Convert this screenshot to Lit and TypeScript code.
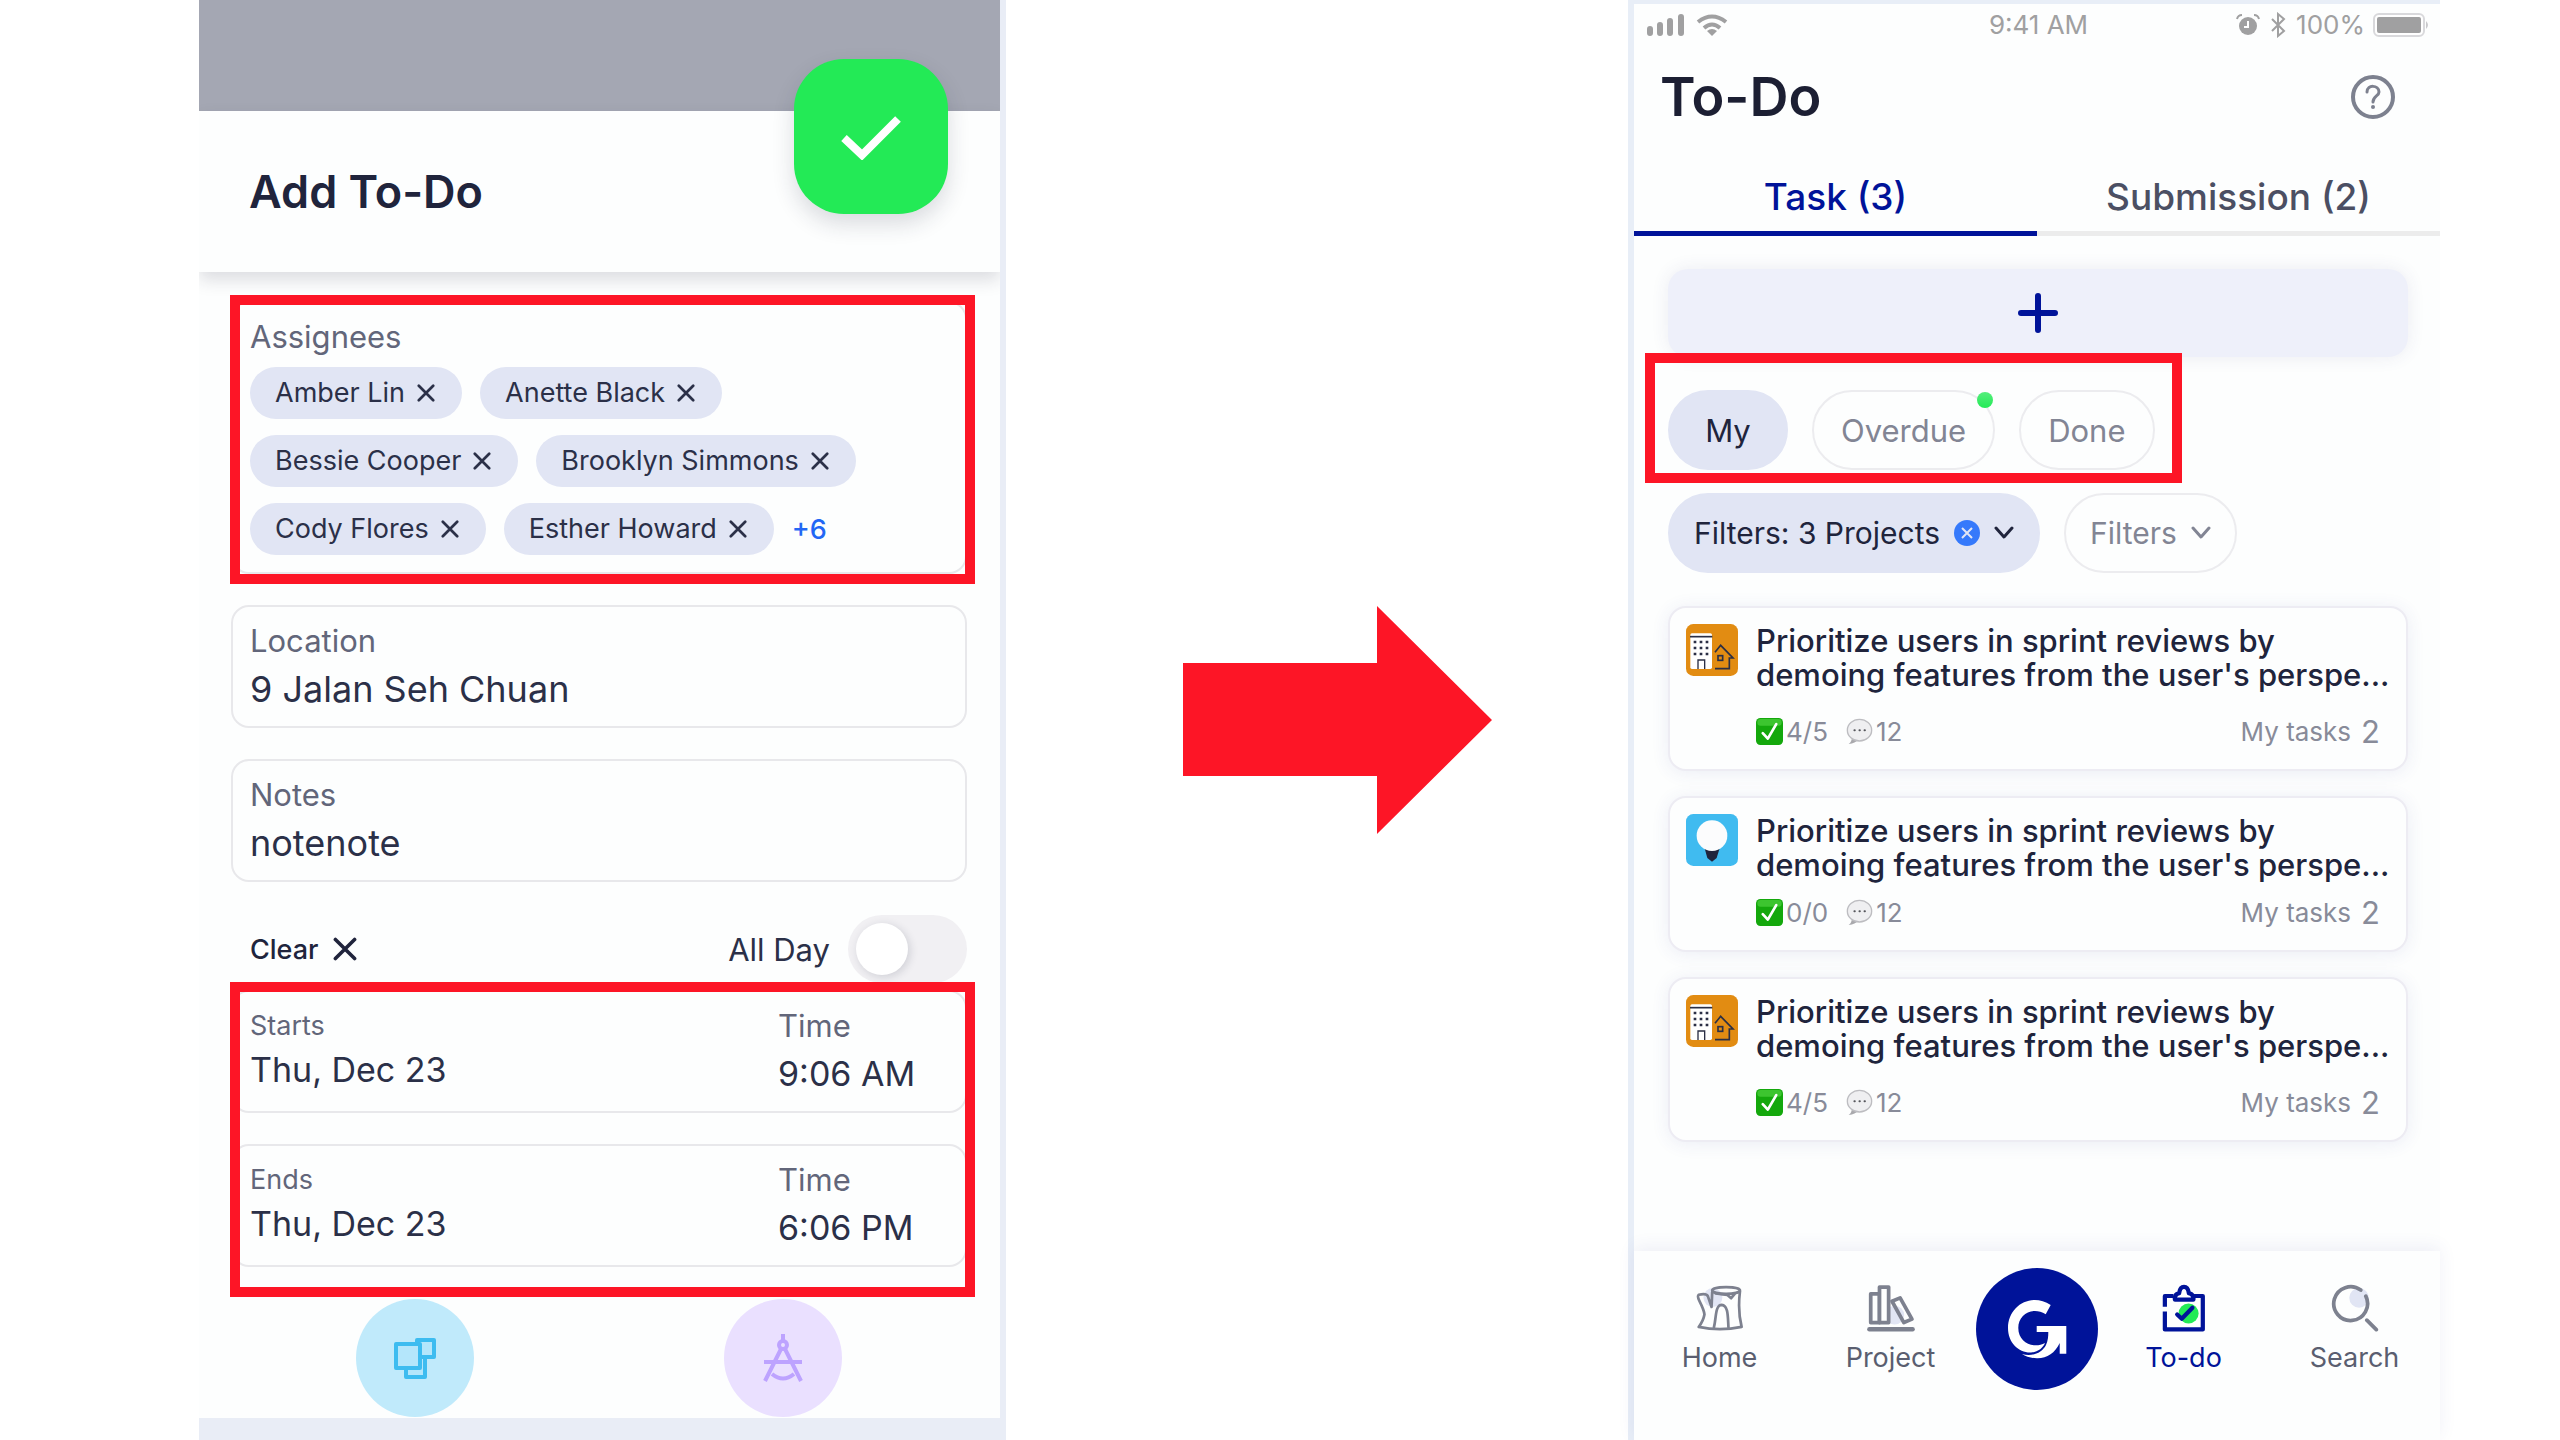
import { LitElement, html, css, svg, nothing } from "lit";
import { customElement, property } from "lit/decorators.js";

const base = css`
  *,
  *::before,
  *::after {
    box-sizing: border-box;
  }
  :host {
    display: block;
    font-family: Inter, "Open Sans", sans-serif;
    color: #20243c;
  }
  button,
  input {
    font: inherit;
    color: inherit;
    margin: 0;
    padding: 0;
    border: 0;
    background: none;
  }
  h1,
  h2,
  p,
  ul {
    margin: 0;
    padding: 0;
    list-style: none;
  }
  svg {
    display: block;
    flex: none;
  }
`;

const cross = (size: number, stroke: number) => html`
  <svg width=${size} height=${size} viewBox="0 0 20 20" aria-hidden="true">
    <path d="M2 2L18 18M18 2L2 18" fill="none" stroke="currentColor" stroke-width=${stroke} stroke-linecap="round" />
  </svg>
`;

const chevron = html`
  <svg width="20" height="14" viewBox="0 0 20 14" aria-hidden="true">
    <path d="M2 2L10 11L18 2" fill="none" stroke="currentColor" stroke-width="3" stroke-linecap="round" stroke-linejoin="round" />
  </svg>
`;

@customElement("add-todo-sheet")
class AddTodoSheet extends LitElement {
  static styles = [
    base,
    css`
      :host {
        display: flex;
        flex-direction: column;
        overflow: hidden;
        background: #fdfefe;
        border-right: 6px solid #e9edf6;
        border-bottom: 22px solid #e9edf6;
      }
      .backdrop {
        height: 111px;
        background: #a4a7b3;
      }
      .head {
        position: relative;
        display: flex;
        align-items: center;
        height: 161px;
        padding: 0 51px 0 50px;
        background: #fdfefe;
        box-shadow: 0 8px 16px rgba(32, 36, 60, 0.15);
      }
      .head h2 {
        font-size: 45px;
        line-height: 60px;
        font-weight: 600;
      }
      .confirm {
        position: absolute;
        top: -52px;
        right: 52px;
        display: grid;
        place-items: center;
        width: 154px;
        height: 155px;
        border-radius: 50px;
        background: #23ea56;
        box-shadow: 0 10px 22px rgba(32, 36, 60, 0.16);
      }
      .body {
        padding: 29px 33px 0 32px;
      }
      .card {
        display: block;
        border: 2px solid #e8e8eb;
        border-radius: 18px;
        padding: 16px 17px 13px;
      }
      .card + .card,
      .framed + .card {
        margin-top: 31px;
      }
      .framed {
        position: relative;
      }
      .framed::after {
        content: "";
        position: absolute;
        inset: -6px -8px -10px -1px;
        border: 10px solid #fd1526;
        pointer-events: none;
      }
      .framed.dates::after {
        inset: -8px -8px -30px -1px;
      }
      .people {
        padding-bottom: 17px;
      }
      .label {
        display: block;
        font-size: 31px;
        line-height: 36px;
        color: #62667a;
      }
      .label.small {
        font-size: 27px;
      }
      .value {
        display: block;
        width: 100%;
        height: 48px;
        margin-top: 6px;
        font-size: 36px;
        line-height: 48px;
        color: #2b3048;
        outline: none;
      }
      .when .value {
        font-size: 34px;
      }
      .value.tight {
        margin-top: 2px;
      }
      .chips {
        display: flex;
        flex-wrap: wrap;
        align-items: center;
        gap: 16px 18px;
        margin-top: 12px;
      }
      .chip {
        display: flex;
        align-items: center;
        gap: 12px;
        height: 52px;
        padding: 0 27px 0 25px;
        border-radius: 26px;
        background: #e1e5f4;
        font-size: 27px;
        line-height: 36px;
        color: #2b3048;
      }
      .more {
        font-size: 27px;
        font-weight: 500;
        color: #2367f5;
        text-decoration: none;
      }
      .options {
        display: flex;
        align-items: center;
        justify-content: space-between;
        height: 68px;
        margin: 33px 0 7px;
      }
      .clear {
        display: flex;
        align-items: center;
        gap: 14px;
        padding-left: 19px;
        font-size: 27px;
        font-weight: 500;
      }
      .allday {
        display: flex;
        align-items: center;
        gap: 18px;
        font-size: 31px;
        color: #2b3048;
      }
      .switch {
        appearance: none;
        width: 119px;
        height: 68px;
        padding: 8px;
        border-radius: 34px;
        background: #f1f0f3;
      }
      .switch::before {
        content: "";
        display: block;
        width: 52px;
        height: 52px;
        border-radius: 50%;
        background: #ffffff;
        box-shadow: 2px 2px 8px rgba(32, 36, 60, 0.16);
      }
      .when {
        display: grid;
        grid-template-columns: 1fr 170px;
      }
      .actions {
        display: grid;
        grid-template-columns: 1fr 1fr;
        justify-items: center;
        margin-top: 32px;
      }
      .round {
        display: grid;
        place-items: center;
        width: 118px;
        height: 118px;
        border-radius: 50%;
      }
      .blue {
        background: #c0eafb;
      }
      .violet {
        background: #eae0ff;
      }
    `,
  ];

  private people = ["Amber Lin", "Anette Black", "Bessie Cooper", "Brooklyn Simmons", "Cody Flores", "Esther Howard"];

  private dates = [
    { id: "start", label: "Starts", day: "Thu, Dec 23", time: "9:06 AM" },
    { id: "end", label: "Ends", day: "Thu, Dec 23", time: "6:06 PM" },
  ];

  render() {
    return html`
      <div class="backdrop"></div>
      <header class="head">
        <h2>Add To-Do</h2>
        <button class="confirm" type="button" aria-label="Save">
          <svg width="62" height="46" viewBox="0 0 62 46">
            <path d="M4 24L22 41L58 5" fill="none" stroke="#fff" stroke-width="8" />
          </svg>
        </button>
      </header>
      <div class="body">
        <div class="framed">
          <section class="card people">
            <span class="label">Assignees</span>
            <div class="chips">
              ${this.people.map(
                (name) => html`<button class="chip" type="button">${name} ${cross(18, 3)}</button>`
              )}
              <a class="more" href="#assignees">+6</a>
            </div>
          </section>
        </div>
        <div class="card">
          <label class="label" for="location">Location</label>
          <input class="value" id="location" type="text" value="9 Jalan Seh Chuan" />
        </div>
        <div class="card">
          <label class="label" for="notes">Notes</label>
          <input class="value" id="notes" type="text" value="notenote" />
        </div>
        <div class="options">
          <button class="clear" type="button">Clear ${cross(24, 3)}</button>
          <label class="allday">All Day <input class="switch" type="checkbox" role="switch" /></label>
        </div>
        <div class="framed dates">
          ${this.dates.map(
            (d) => html`
              <div class="card when">
                <div>
                  <label class="label small" for="${d.id}-day">${d.label}</label>
                  <input class="value tight" id="${d.id}-day" type="text" value=${d.day} />
                </div>
                <div>
                  <label class="label" for="${d.id}-time">Time</label>
                  <input class="value" id="${d.id}-time" type="text" value=${d.time} />
                </div>
              </div>
            `
          )}
        </div>
        <div class="actions">
          <button class="round blue" type="button" aria-label="Project">
            <svg width="48" height="46" viewBox="0 0 48 46" fill="#b4e6fb" stroke="#3dbcf0" stroke-width="4" stroke-linejoin="round">
              <path d="M15 33V42H34V22" />
              <path d="M26 5H43V22H26Z" />
              <path d="M5 9H29V33H5Z" />
            </svg>
          </button>
          <button class="round violet" type="button" aria-label="Design">
            <svg width="44" height="50" viewBox="0 0 44 50" fill="none" stroke="#bda3ff" stroke-width="4">
              <path d="M22 1V8" />
              <circle cx="22" cy="12" r="4" />
              <path d="M20 16L4 48M24 16L40 48M3 29H41" />
              <path d="M11 41Q22 50 33 41" />
            </svg>
          </button>
        </div>
      </div>
    `;
  }
}

const projectTile = {
  building: svg`
    <rect width="156" height="156" rx="22" fill="#e28c12" />
    <rect x="13" y="28" width="65" height="107" rx="5" fill="#fff" />
    <path d="M12 38H79" stroke="#2b2f45" stroke-width="5" />
    <path d="M23 54H67M23 72H67M23 90H67" stroke="#2b2f45" stroke-width="8" stroke-dasharray="8 10" />
    <path d="M36 135V108H56V135" fill="none" stroke="#2b2f45" stroke-width="4" />
    <path d="M87 85L104 64L141 102H130V134H87" fill="none" stroke="#2b2f45" stroke-width="5" />
    <rect x="96" y="95" width="14" height="14" fill="none" stroke="#2b2f45" stroke-width="5" />
  `,
  bulb: svg`
    <rect width="156" height="156" rx="22" fill="#40bbf0" />
    <path d="M55 100H102L92 132L78 143L64 132Z" fill="#20243c" />
    <circle cx="78" cy="65" r="46" fill="#fcfcfd" />
  `,
};

@customElement("task-card")
class TaskCard extends LitElement {
  @property() kind: "building" | "bulb" = "building";
  @property() done = "";
  @property({ type: Boolean, reflect: true }) compact = false;

  static styles = [
    base,
    css`
      .card {
        display: flex;
        gap: 18px;
        padding: 16px 14px 18px 16px;
        border: 2px solid #edecf3;
        border-radius: 18px;
        background: #fdfefe;
        box-shadow: 0 2px 18px rgba(60, 70, 150, 0.09);
      }
      .main {
        flex: 1;
        min-width: 0;
      }
      .title {
        font-size: 31px;
        line-height: 34px;
        font-weight: 500;
        white-space: nowrap;
      }
      .meta {
        display: flex;
        align-items: center;
        height: 40px;
        margin-top: 19px;
        padding-right: 12px;
        font-size: 26px;
        color: #888b99;
      }
      :host([compact]) .meta {
        margin-top: 10px;
      }
      .stat {
        display: flex;
        align-items: center;
        gap: 3px;
        margin-right: 18px;
      }
      .owner {
        display: flex;
        align-items: center;
        gap: 10px;
        margin-left: auto;
      }
      .count {
        font-size: 31px;
      }
    `,
  ];

  render() {
    return html`
      <article class="card">
        <svg width="52" height="52" viewBox="0 0 156 156" aria-hidden="true">${projectTile[this.kind]}</svg>
        <div class="main">
          <p class="title">Prioritize users in sprint reviews by<br />demoing features from the user's perspe...</p>
          <div class="meta">
            <span class="stat">
              <svg width="27" height="27" viewBox="0 0 80 80" aria-hidden="true">
                <rect width="80" height="80" rx="13" fill="#14a80c" />
                <rect x="4" y="3" width="72" height="20" rx="9" fill="#3cc52f" />
                <path d="M20 45L35 61L60 18" fill="none" stroke="#fff" stroke-width="8" stroke-linecap="round" stroke-linejoin="round" />
              </svg>
              ${this.done}
            </span>
            <span class="stat">
              <svg width="27" height="27" viewBox="0 0 80 80" aria-hidden="true">
                <path d="M18 56Q17 70 8 77Q28 76 36 64Z" fill="#a9a9ad" />
                <ellipse cx="40" cy="36" rx="36" ry="32" fill="#efeff1" stroke="#bdbdc1" stroke-width="4" />
                <path d="M25 36h1M40 36h1M55 36h1" stroke="#55565c" stroke-width="6" stroke-linecap="round" />
              </svg>
              12
            </span>
            <span class="owner">My tasks <span class="count">2</span></span>
          </div>
        </div>
      </article>
    `;
  }
}

const navIcons = {
  home: svg`
    <circle cx="50" cy="40" r="28" fill="#e1e5f4" />
    <g fill="none" stroke="#7d818f" stroke-width="8" stroke-linejoin="round" stroke-linecap="round">
      <path d="M48 24L46 68L35 36Q30 26 8 32Q3 36 10 50Q24 78 25 90Q22 108 8 127Q70 140 135 127Q123 80 130 22" />
      <ellipse cx="89" cy="19" rx="41" ry="10" />
      <path d="M58 28L92 32L104 42L114 30" />
      <path d="M53 128C60 104 56 62 76 62C96 64 94 96 96 128" />
    </g>`,
  project: svg`
    <circle cx="82" cy="92" r="28" fill="#e1e5f4" />
    <g fill="#fdfefe" stroke="#7d818f" stroke-width="11" stroke-linejoin="round" stroke-linecap="round">
      <path d="M11 29H37V114H11Z" />
      <path d="M37 9H64V114H37Z" />
      <path d="M74 51L98 41L133 104L109 114Z" fill="none" />
      <path d="M7 134H135" stroke-width="13" />
    </g>`,
  todo: svg`
    <circle cx="83" cy="91" r="31" fill="#23ea56" />
    <g fill="none" stroke="#001399" stroke-width="13" stroke-linejoin="round" stroke-linecap="butt">
      <path d="M36 37H10V70M10 85V140H127V37H100" />
      <path d="M41 48H98C100 36 92 30 84 28C82 14 78 9 69 9C60 9 56 14 54 28C46 30 39 36 41 48Z" fill="#fff" />
      <path d="M48 94L62 107L95 73" stroke-linecap="round" />
    </g>`,
  search: svg`
    <circle cx="83" cy="41" r="29" fill="#e1e5f4" />
    <g fill="none" stroke="#7d818f" stroke-width="11" stroke-linecap="round">
      <path d="M88 18A50 50 0 1 0 103 36" />
      <path d="M106 107L134 135" />
    </g>`,
};

@customElement("todo-screen")
class TodoScreen extends LitElement {
  static styles = [
    base,
    css`
      :host {
        display: flex;
        flex-direction: column;
        background: #fdfefe;
        border-left: 6px solid #e8eef7;
        border-top: 4px solid #e8eef7;
      }
      .status {
        display: grid;
        grid-template-columns: 1fr auto 1fr;
        align-items: center;
        height: 41px;
        padding: 0 10px 0 13px;
        font-size: 26px;
        line-height: 32px;
        color: #a0a0a1;
      }
      .side {
        display: flex;
        align-items: center;
        gap: 12px;
      }
      .side.end {
        justify-content: flex-end;
        gap: 8px;
      }
      .top {
        display: flex;
        align-items: center;
        justify-content: space-between;
        height: 104px;
        padding: 0 45px 0 26px;
      }
      .top h1 {
        font-size: 54px;
        line-height: 60px;
        font-weight: 600;
        color: #1c1f33;
      }
      .tabs {
        display: grid;
        grid-template-columns: 1fr 1fr;
        margin-top: 14px;
      }
      .tab {
        height: 73px;
        border-bottom: 5px solid #ececec;
        font-size: 37px;
        line-height: 48px;
        font-weight: 500;
        color: #4b4f63;
      }
      .tab.on {
        border-color: #001399;
        color: #001399;
      }
      .content {
        padding: 33px 32px 24px 34px;
      }
      .add {
        display: grid;
        place-items: center;
        width: 100%;
        height: 88px;
        border-radius: 20px;
        background: #eef0fa;
        box-shadow: 0 0 18px rgba(60, 60, 120, 0.09);
      }
      .scopes {
        position: relative;
        width: fit-content;
        margin-top: 33px;
      }
      .scopes::after {
        content: "";
        position: absolute;
        inset: -37px -27px -13px -23px;
        border: 10px solid #fd1526;
        pointer-events: none;
      }
      .row {
        display: flex;
        gap: 24px;
      }
      .filters {
        margin-top: 23px;
      }
      .pill {
        position: relative;
        display: flex;
        align-items: center;
        justify-content: center;
        gap: 14px;
        height: 80px;
        min-width: 120px;
        padding: 0 24px;
        border: 2px solid #ececef;
        border-radius: 40px;
        font-size: 30px;
        color: #828594;
      }
      .scopes .pill {
        padding: 0 27px;
        font-size: 31px;
      }
      .pill.on {
        border-color: #e1e5f4;
        background: #e1e5f4;
        color: #20243c;
      }
      .dot {
        position: absolute;
        top: 0;
        right: 0;
        width: 16px;
        height: 16px;
        border-radius: 50%;
        background: linear-gradient(#55ee7c, #23ea56);
      }
      .list {
        display: flex;
        flex-direction: column;
        gap: 25px;
        margin-top: 33px;
      }
      .nav {
        display: grid;
        grid-template-columns: 1fr 1fr 122px 1fr 1fr;
        height: 189px;
        margin-top: auto;
        padding-top: 17px;
        background: #fdfefe;
        box-shadow: 0 -4px 16px rgba(60, 70, 150, 0.08);
      }
      .item {
        display: flex;
        flex-direction: column;
        align-items: center;
        height: 120px;
        padding-top: 16px;
        gap: 8px;
        font-size: 27px;
        line-height: 36px;
        color: #5a5e70;
        text-decoration: none;
      }
      .item.on {
        color: #001399;
      }
      .brand {
        width: 122px;
        height: 122px;
        border-radius: 50%;
        background: #001399;
      }
    `,
  ];

  private item(label: string, icon: keyof typeof navIcons, box: string, on = false) {
    return html`
      <a class="item ${on ? "on" : ""}" href="#${icon}" aria-current=${on ? "page" : nothing}>
        <svg width="48" height="48" viewBox=${box} aria-hidden="true">${navIcons[icon]}</svg>
        ${label}
      </a>
    `;
  }

  render() {
    return html`
      <div class="status">
        <div class="side">
          <svg width="37" height="22" viewBox="0 0 37 22" stroke="#a0a0a1" stroke-width="6" stroke-linecap="round">
            <path d="M3 15V19M13 11V19M23 7V19M34 3V19" />
          </svg>
          <svg width="32" height="22" viewBox="0 0 32 22" fill="none" stroke="#a0a0a1" stroke-width="4">
            <path d="M2 8Q16 -3 30 8" />
            <path d="M8 14Q16 7 24 14" />
            <path d="M11 17Q16 13 21 17L16 22Z" fill="#a0a0a1" stroke="none" />
          </svg>
        </div>
        <span>9:41 AM</span>
        <div class="side end">
          <svg width="24" height="24" viewBox="0 0 24 24" fill="none" stroke="#a0a0a1" stroke-width="2">
            <circle cx="12" cy="13" r="9" fill="#a0a0a1" stroke="none" />
            <path d="M12 8V14H8" stroke="#fff" />
            <path d="M1 6Q2 2 6 2M18 2Q22 2 23 6" />
          </svg>
          <svg width="20" height="26" viewBox="0 0 20 26" fill="none" stroke="#a0a0a1" stroke-width="2">
            <path d="M4 7L16 19L10 24V2L16 7L4 19" />
          </svg>
          <span>100%</span>
          <svg width="57" height="24" viewBox="0 0 57 24">
            <rect x="1" y="1" width="50" height="22" rx="5" fill="#fff" stroke="#d9d9dc" stroke-width="2" />
            <rect x="4" y="4" width="44" height="16" rx="2" fill="#a0a0a1" />
            <path d="M53 8Q57 12 53 16Z" fill="#c9c9cc" />
          </svg>
        </div>
      </div>
      <header class="top">
        <h1>To-Do</h1>
        <button type="button" aria-label="Help">
          <svg width="44" height="44" viewBox="0 0 44 44" fill="none" stroke="#7d818f" stroke-width="4">
            <circle cx="22" cy="22" r="20" />
            <path d="M16 17C16 9 28 10 28 17C28 21 22 21 22 27" stroke-linecap="round" stroke-width="3" />
            <circle cx="22" cy="32" r="2" fill="#7d818f" stroke="none" />
          </svg>
        </button>
      </header>
      <div class="tabs" role="tablist">
        <button class="tab on" type="button" role="tab" aria-selected="true">Task (3)</button>
        <button class="tab" type="button" role="tab" aria-selected="false">Submission (2)</button>
      </div>
      <main class="content">
        <button class="add" type="button" aria-label="Add task">
          <svg width="40" height="40" viewBox="0 0 40 40">
            <path d="M20 3V37M3 20H37" stroke="#001399" stroke-width="6" stroke-linecap="round" />
          </svg>
        </button>
        <div class="scopes row">
          <button class="pill on" type="button">My</button>
          <button class="pill" type="button">Overdue<span class="dot"></span></button>
          <button class="pill" type="button">Done</button>
        </div>
        <div class="filters row">
          <button class="pill on" type="button">
            Filters: 3 Projects
            <svg width="26" height="26" viewBox="0 0 26 26">
              <circle cx="13" cy="13" r="13" fill="#3579fb" />
              <path d="M8 8L18 18M18 8L8 18" stroke="#e1e5f4" stroke-width="2" />
            </svg>
            ${chevron}
          </button>
          <button class="pill" type="button">Filters ${chevron}</button>
        </div>
        <div class="list">
          <task-card kind="building" done="4/5"></task-card>
          <task-card kind="bulb" done="0/0" compact></task-card>
          <task-card kind="building" done="4/5"></task-card>
        </div>
      </main>
      <nav class="nav">
        ${this.item("Home", "home", "0 0 142 142")} ${this.item("Project", "project", "0 0 142 142")}
        <button class="brand" type="button" aria-label="Start">
          <svg width="122" height="122" viewBox="0 0 122 122" fill="#fff">
            <path d="M74.700 37C55 24 32 38 32 60C32 75 43 85 55 84.500C62 84 67 80 69 75C58 81 42.300 75 42.300 60C42.300 46 57 38 69.700 46.300Z" />
            <path d="M60.700 58H90.300V85.700H83.700V75C79 85 71 90.500 61 90.300C55 90.300 50 88.500 46 86C56 89 66 85 70 77C72 73 72.300 68 72.300 64H60.700Z" />
          </svg>
        </button>
        ${this.item("To-do", "todo", "-5 0 148 148", true)} ${this.item("Search", "search", "0 0 142 142")}
      </nav>
    `;
  }
}

@customElement("app-root")
class AppRoot extends LitElement {
  static styles = [
    base,
    css`
      :host {
        display: grid;
        grid-template-columns: 199fr 807fr 622fr 812fr 120fr;
        min-height: 100vh;
        background: #ffffff;
      }
      add-todo-sheet {
        grid-column: 2;
      }
      .middle {
        grid-column: 3;
        display: grid;
        place-items: center;
        padding-left: 40px;
      }
      todo-screen {
        grid-column: 4;
      }
    `,
  ];

  render() {
    return html`
      <add-todo-sheet></add-todo-sheet>
      <div class="middle">
        <svg width="309" height="228" viewBox="0 0 309 228" aria-hidden="true">
          <path d="M0 57H194V0L309 114L194 228V170H0Z" fill="#fd1526" />
        </svg>
      </div>
      <todo-screen></todo-screen>
    `;
  }
}
